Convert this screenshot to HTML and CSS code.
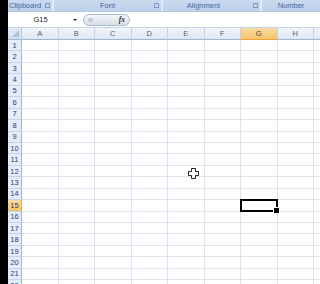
FILE: index.html
```html
<html lang="en"><head>
  <meta charset="UTF-8">
  <title>Book1</title>
  <link rel="stylesheet" href="styles.css">
</head>
<body>
  <main class="window">
    <section class="ribbon">
      <div class="group g-clip"><span>Clipboard</span><i class="launch"></i></div>
      <div class="group g-font"><span>Font</span><i class="launch"></i></div>
      <div class="group g-align"><span>Alignment</span><i class="launch"></i></div>
      <div class="group g-num"><span>Number</span></div>
    </section>
    <section class="formula">
      <div class="namebox"><span>G15</span><b class="arrow"></b></div>
      <div class="fxpill"><i class="dot"></i><em>fx</em></div>
      <div class="input"></div>
    </section>
    <section class="sheet" id="sheet"></section>
  </main>
  <svg class="cursor" width="11" height="11" viewBox="0 0 11 11">
    <path d="M3.5 0.5h4v3h3v4h-3v3h-4v-3h-3v-4h3z" fill="#fff" stroke="#222" stroke-width="1"/>
  </svg>
  <script>
    const sheet = document.getElementById("sheet");
    const cols = ["A","B","C","D","E","F","G","H",""];
    let html = '<div class="corner"><i></i></div>';
    cols.forEach(c => {
      html += `<div class="colhead ${c === "G" ? "active" : ""}">${c}</div>`;
    });
    for (let r = 1; r <= 22; r++) {
      html += `<div class="rowhead ${r === 15 ? "active" : ""}">${r}</div>`;
      cols.forEach(c => {
        const sel = (r === 15 && c === "G") ? " sel" : "";
        html += `<div class="cell${sel}"></div>`;
      });
    }
    sheet.innerHTML = html;
  </script>
</body></html>
```

FILE: styles.css
```css
* {
  margin: 0;
  padding: 0;
  box-sizing: border-box;
}
body {
  background: #000;
  width: 320px;
  height: 284px;
  overflow: hidden;
  font-family: "Liberation Sans", Arial, sans-serif;
}
.window {
  margin-left: 8px;
  width: 312px;
  height: 284px;
  background: #fff;
  overflow: hidden;
}
.ribbon {
  height: 12px;
  display: flex;
  background: #cddcef;
  border-bottom: 1px solid #b5c9e4;
}
.group {
  display: flex;
  align-items: center;
  justify-content: center;
  position: relative;
  font-size: 7.5px;
  color: #4469a3;
  background: linear-gradient(#cadaef, #bcd0ea);
  border-right: 2px solid #e1eaf6;
}
.g-clip { width: 46px; justify-content: flex-start; padding-left: 1px; }
.g-font { width: 109px; }
.g-align { width: 99px; padding-right: 16px; }
.g-num { flex: 1; border-right: none; }
.launch {
  position: absolute;
  right: 2px;
  top: 3px;
  width: 5px;
  height: 5px;
  border: 1px solid #7f9cc6;
}
.formula {
  height: 16px;
  display: flex;
  align-items: center;
  background: #fff;
  border-bottom: 1px solid #c5d3e6;
}
.namebox {
  width: 75px;
  height: 13px;
  display: flex;
  align-items: center;
  font-size: 7.5px;
  color: #222;
}
.namebox span {
  flex: 1;
  text-align: center;
  padding-left: 4px;
}
.arrow {
  width: 0;
  height: 0;
  border-left: 2px solid transparent;
  border-right: 2px solid transparent;
  border-top: 2px solid #222;
  margin-right: 6px;
  margin-left: 4px;
}
.fxpill {
  width: 47px;
  height: 12px;
  border-radius: 6px;
  border: 1px solid #a9bad2;
  background: linear-gradient(#f4f6f9, #d7dee8);
  display: flex;
  align-items: center;
  justify-content: space-between;
  padding: 0 4px 0 4px;
}
.dot {
  width: 5px;
  height: 4px;
  border-radius: 2px;
  background: #c4ccd8;
}
.fxpill em {
  font-family: "Liberation Serif", serif;
  font-size: 7.5px;
  color: #333;
  font-weight: bold;
}
.input {
  flex: 1;
  height: 13px;
}
.sheet {
  display: grid;
  grid-template-columns: 14px repeat(9, 36.5px);
  grid-auto-rows: 11.45px;
  grid-template-rows: 12px;
  font-size: 7.5px;
}
.corner {
  background: linear-gradient(#e3ebf6, #d3dfee);
  border-right: 1px solid #b6c6de;
  border-bottom: 1px solid #9eb6ce;
  position: relative;
}
.corner i {
  position: absolute;
  right: 2px;
  bottom: 2px;
  width: 0;
  height: 0;
  border-left: 7px solid transparent;
  border-bottom: 7px solid #b2c1d6;
}
.colhead {
  display: flex;
  align-items: center;
  justify-content: center;
  color: #4c5f7a;
  background: linear-gradient(#f2f5fa, #dfe7f2);
  border-right: 1px solid #c5d1e2;
  border-bottom: 1px solid #9eb6ce;
}
.colhead.active {
  background: linear-gradient(#f9dba2, #f5c46a);
  border-bottom: 1px solid #f2a43a;
  color: #4a4030;
}
.rowhead {
  display: flex;
  align-items: center;
  justify-content: center;
  color: #26417a;
  background: #e4ecf7;
  border-right: 1px solid #9eb6ce;
  border-bottom: 1px solid #c5d3e6;
}
.rowhead.active {
  background: linear-gradient(#f9dba2, #f5c46a);
  border-right: 1px solid #f2a43a;
  color: #1e3a6a;
}
.cell {
  border-right: 1px solid #dde3ee;
  border-bottom: 1px solid #dde3ee;
}
.cell.sel {
  border: 2px solid #000;
  position: relative;
  margin: -1px 0 0 -1px;
}
.cell.sel::after {
  content: "";
  position: absolute;
  right: -4px;
  bottom: -4px;
  width: 5px;
  height: 5px;
  background: #000;
  border: 1px solid #fff;
}
.cursor {
  position: absolute;
  left: 188px;
  top: 168px;
}
```
